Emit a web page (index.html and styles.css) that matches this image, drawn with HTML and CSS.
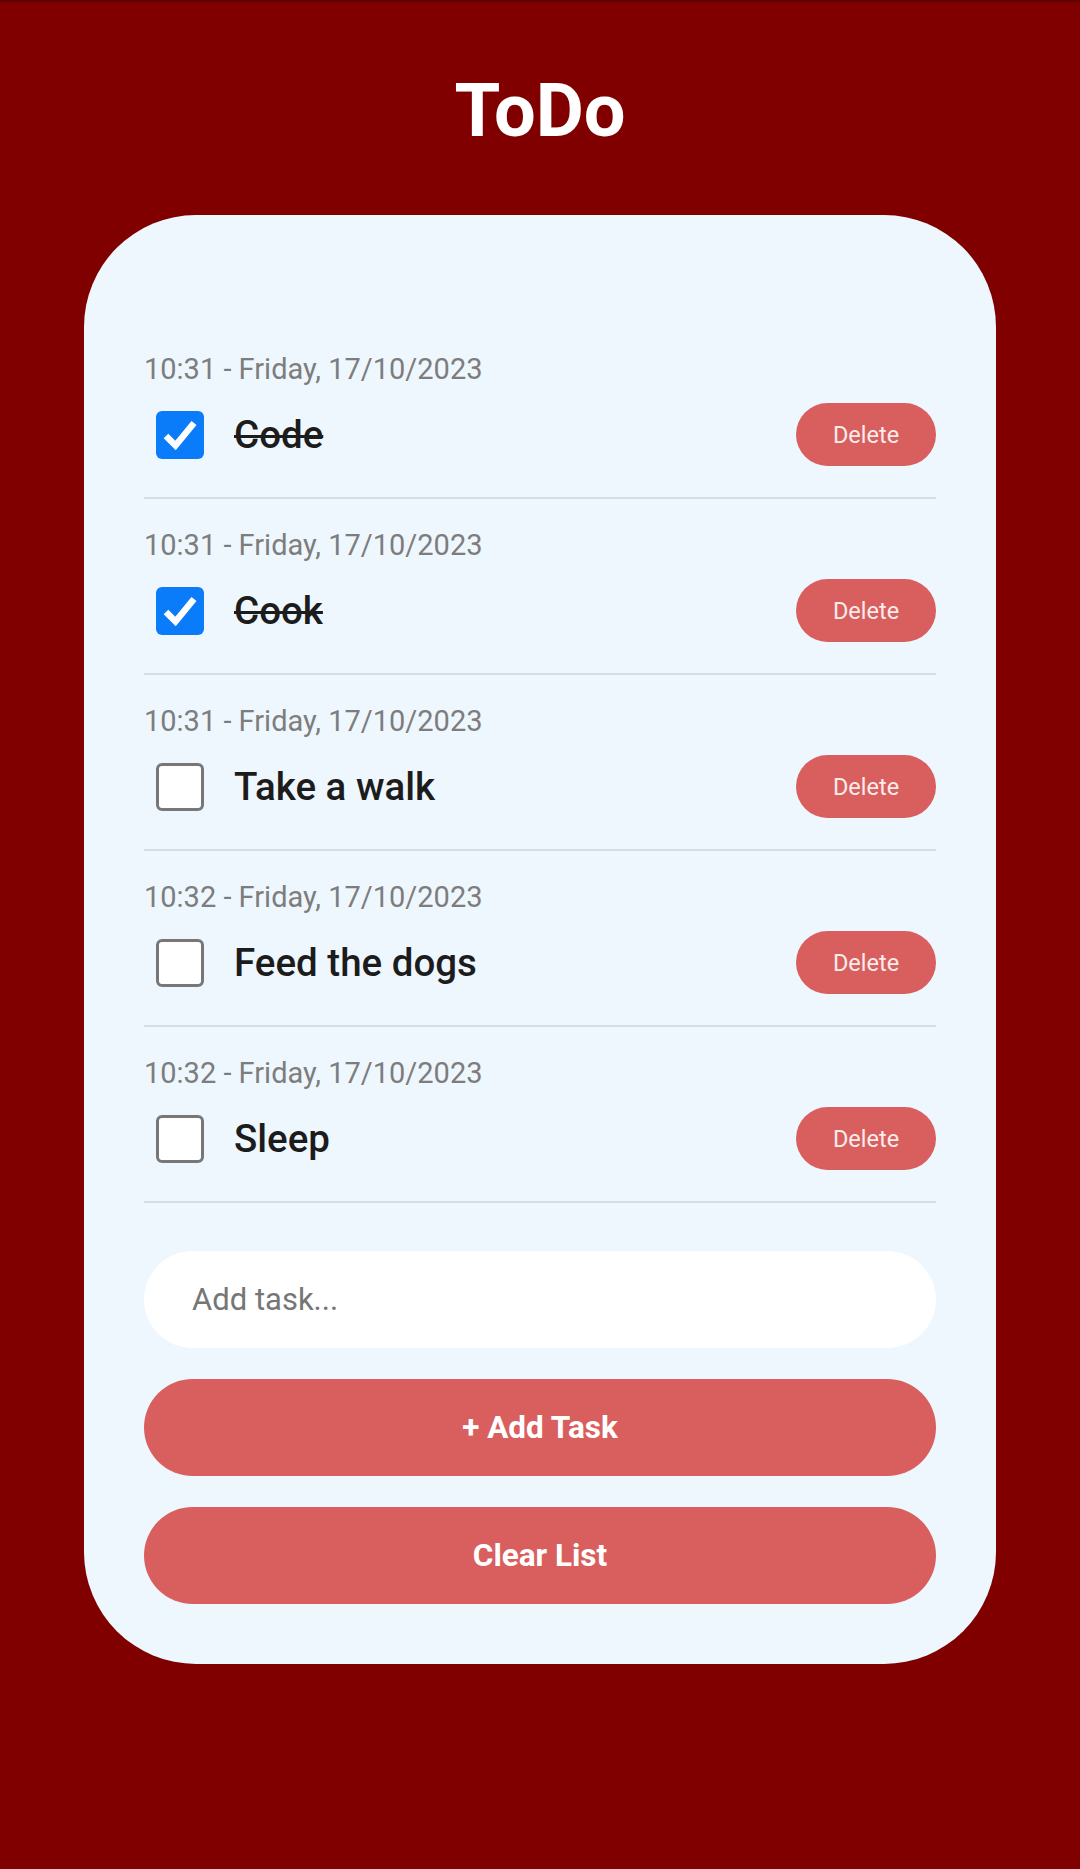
FILE: index.html
```html
<!DOCTYPE html>
<html lang="en">
<head>
<meta charset="utf-8">
<title>ToDo</title>
<link rel="stylesheet" href="styles.css">
</head>
<body>
<h1 class="title">ToDo</h1>
<main class="card">
  <ul class="task-list">
    <li class="task">
      <div class="task-date">10:31 - Friday, 17/10/2023</div>
      <div class="task-row">
        <span class="check checked"><svg viewBox="0 0 48 48" width="48" height="48"><polyline points="10,25 19.5,34.5 38,12" fill="none" stroke="#fff" stroke-width="6.5" stroke-linejoin="miter"/></svg></span>
        <span class="task-text done">Code</span>
        <button class="delete-btn">Delete</button>
      </div>
    </li>
    <li class="task">
      <div class="task-date">10:31 - Friday, 17/10/2023</div>
      <div class="task-row">
        <span class="check checked"><svg viewBox="0 0 48 48" width="48" height="48"><polyline points="10,25 19.5,34.5 38,12" fill="none" stroke="#fff" stroke-width="6.5" stroke-linejoin="miter"/></svg></span>
        <span class="task-text done">Cook</span>
        <button class="delete-btn">Delete</button>
      </div>
    </li>
    <li class="task">
      <div class="task-date">10:31 - Friday, 17/10/2023</div>
      <div class="task-row">
        <span class="check"></span>
        <span class="task-text">Take a walk</span>
        <button class="delete-btn">Delete</button>
      </div>
    </li>
    <li class="task">
      <div class="task-date">10:32 - Friday, 17/10/2023</div>
      <div class="task-row">
        <span class="check"></span>
        <span class="task-text">Feed the dogs</span>
        <button class="delete-btn">Delete</button>
      </div>
    </li>
    <li class="task">
      <div class="task-date">10:32 - Friday, 17/10/2023</div>
      <div class="task-row">
        <span class="check"></span>
        <span class="task-text">Sleep</span>
        <button class="delete-btn">Delete</button>
      </div>
    </li>
  </ul>
  <input class="task-input" type="text" placeholder="Add task...">
  <button class="big-btn add-btn">+ Add Task</button>
  <button class="big-btn clear-btn">Clear List</button>
</main>
</body>
</html>
```

FILE: styles.css
```css
html, body {
  margin: 0;
  padding: 0;
}
body {
  background: #800000;
  min-height: 1869px;
  font-family: Roboto, "Noto Sans", sans-serif;
  box-shadow: inset 0 3px 3px -2px rgba(0, 0, 0, 0.45);
  overflow: hidden;
}
.title {
  margin: 0;
  padding-top: 68px;
  font-size: 74px;
  line-height: 86px;
  font-weight: 700;
  color: #ffffff;
  text-align: center;
}
.card {
  margin: 61px 84px 0;
  background: #eff7fe;
  border-radius: 112px;
  padding: 108px 60px 60px;
}
.task-list {
  list-style: none;
  margin: 0;
  padding: 0;
}
.task {
  padding: 28px 0 31px;
  border-bottom: 2px solid #d4dce4;
}
.task-date {
  font-size: 29px;
  line-height: 36px;
  color: #7d7d7d;
}
.task-row {
  display: flex;
  align-items: center;
  height: 63px;
  margin-top: 16px;
}
.check {
  width: 48px;
  height: 48px;
  box-sizing: border-box;
  margin-left: 12px;
  border-radius: 6px;
  border: 3px solid #777777;
  background: #ffffff;
  flex: none;
}
.check svg {
  display: block;
}
.check.checked {
  border: none;
  background: #0b7cf9;
}
.task-text {
  flex: 1;
  margin-left: 30px;
  font-size: 38.5px;
  font-weight: 500;
  color: #1c1c1c;
}
.task-text.done {
  text-decoration: line-through;
  text-decoration-thickness: 3px;
}
.delete-btn {
  width: 140px;
  height: 63px;
  border: none;
  border-radius: 32px;
  background: #d95f5f;
  color: #fbecec;
  font-family: Roboto, "Noto Sans", sans-serif;
  font-size: 23.5px;
  padding: 0;
  flex: none;
}
.task-input {
  display: block;
  width: 100%;
  box-sizing: border-box;
  height: 97px;
  margin-top: 48px;
  border: none;
  border-radius: 49px;
  background: #ffffff;
  padding: 0 0 0 48px;
  font-family: Roboto, "Noto Sans", sans-serif;
  font-size: 31px;
  color: #222;
  outline: none;
}
.task-input::placeholder {
  color: #767676;
}
.big-btn {
  display: block;
  width: 100%;
  height: 97px;
  margin-top: 31px;
  border: none;
  border-radius: 49px;
  background: #d95f5f;
  color: #ffffff;
  font-family: Roboto, "Noto Sans", sans-serif;
  font-size: 31.5px;
  font-weight: 700;
  padding: 0;
}
```
